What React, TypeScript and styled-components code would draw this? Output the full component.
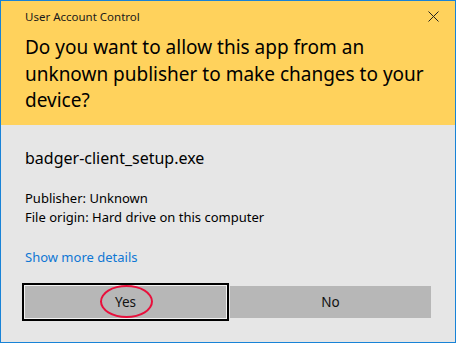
import React from "react";
import styled, { createGlobalStyle } from "styled-components";

const GlobalStyle = createGlobalStyle`
  html, body {
    margin: 0;
    padding: 0;
    background: #ffffff;
  }
  body {
    font-family: "Noto Sans", "Open Sans", sans-serif;
    color: #000000;
  }
`;

const Window = styled.div`
  width: 456px;
  height: 343px;
  box-sizing: border-box;
  border: 1px solid #1883d7;
  background: #e6e6e6;
  display: flex;
  flex-direction: column;
`;

const Header = styled.div`
  background: #ffd25c;
  height: 124px;
  padding: 0 0 0 24px;
  box-sizing: border-box;
`;

const TitleBar = styled.div`
  display: flex;
  justify-content: space-between;
  align-items: center;
  height: 32px;
`;

const Title = styled.span`
  font-size: 11.5px;
  line-height: 16px;
  color: #1a1a1a;
`;

const CloseButton = styled.button`
  width: 44px;
  height: 32px;
  border: none;
  background: transparent;
  padding: 0;
  display: flex;
  align-items: center;
  justify-content: center;
  margin-top: -1px;
`;

const Question = styled.h1`
  margin: 1px 0 0;
  font-size: 19px;
  font-weight: 400;
  line-height: 26.5px;
  width: 420px;
`;

const Body = styled.div`
  flex: 1;
  padding: 0 24px;
  display: flex;
  flex-direction: column;
`;

const FileName = styled.div`
  font-size: 16px;
  line-height: 22px;
  margin-top: 22px;
`;

const Details = styled.div`
  margin-top: 20px;
  font-size: 13px;
  line-height: 19px;
`;

const MoreLink = styled.a`
  margin-top: 21px;
  font-size: 13px;
  line-height: 18px;
  color: #0f77d4;
  text-decoration: none;
  align-self: flex-start;
`;

const ButtonRow = styled.div`
  display: flex;
  gap: 4px;
  margin-top: 20px;
`;

const DialogButton = styled.button<{ $focused?: boolean }>`
  position: relative;
  width: 201px;
  height: 32px;
  border: none;
  padding: 0;
  background: #b7b7b7;
  font-family: "Noto Sans", "Open Sans", sans-serif;
  font-size: 13.5px;
  color: #111111;
  box-shadow: ${(p) =>
    p.$focused ? "0 0 0 1px #f2f2f2, 0 0 0 3px #000000" : "none"};
`;

const Highlight = styled.span`
  position: absolute;
  left: 75px;
  top: -1px;
  width: 53px;
  height: 33px;
  box-sizing: border-box;
  border: 2px solid #e8103c;
  border-radius: 50%;
`;

function CloseIcon() {
  return (
    <svg width="11" height="11" viewBox="0 0 11 11">
      <path d="M0.5 0.5 L10.5 10.5 M10.5 0.5 L0.5 10.5" stroke="#222" strokeWidth="1" />
    </svg>
  );
}

function App() {
  return (
    <>
      <GlobalStyle />
      <Window>
        <Header>
          <TitleBar>
            <Title>User Account Control</Title>
            <CloseButton aria-label="Close">
              <CloseIcon />
            </CloseButton>
          </TitleBar>
          <Question>
            Do you want to allow this app from an unknown publisher to make
            changes to your device?
          </Question>
        </Header>
        <Body>
          <FileName>badger-client_setup.exe</FileName>
          <Details>
            <div>Publisher: Unknown</div>
            <div>File origin: Hard drive on this computer</div>
          </Details>
          <MoreLink href="#">Show more details</MoreLink>
          <ButtonRow>
            <DialogButton $focused>
              Yes
              <Highlight />
            </DialogButton>
            <DialogButton>No</DialogButton>
          </ButtonRow>
        </Body>
      </Window>
    </>
  );
}

export default App;
